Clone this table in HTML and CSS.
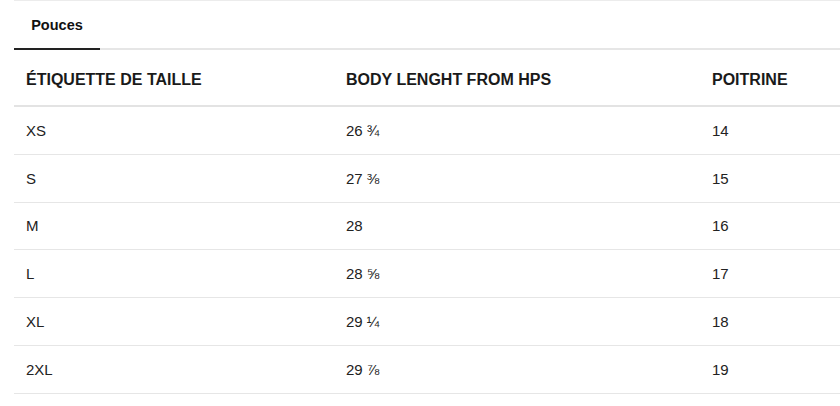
FILE: index.html
```html
<!DOCTYPE html>
<html lang="fr">
<head>
<meta charset="utf-8">
<link rel="stylesheet" href="styles.css">
</head>
<body>
<div class="wrap">
  <div class="tabs">
    <div class="tab active">Pouces</div>
  </div>
  <table class="sizes">
    <colgroup>
      <col class="c1"><col class="c2"><col class="c3">
    </colgroup>
    <thead>
      <tr><th>ÉTIQUETTE DE TAILLE</th><th>BODY LENGHT FROM HPS</th><th>POITRINE</th></tr>
    </thead>
    <tbody>
      <tr><td>XS</td><td>26 ¾</td><td>14</td></tr>
      <tr><td>S</td><td>27 ⅜</td><td>15</td></tr>
      <tr><td>M</td><td>28</td><td>16</td></tr>
      <tr><td>L</td><td>28 ⅝</td><td>17</td></tr>
      <tr><td>XL</td><td>29 ¼</td><td>18</td></tr>
      <tr><td>2XL</td><td>29 ⅞</td><td>19</td></tr>
    </tbody>
  </table>
</div>
</body>
</html>
```

FILE: styles.css
```css
html, body {
  margin: 0;
  padding: 0;
  background: #fff;
}
body {
  font-family: "Liberation Sans", Arial, sans-serif;
  color: #222;
  font-size: 15px;
}
.wrap {
  margin-left: 14px;
  border-top: 1px solid #ececec;
}
.tabs {
  display: flex;
  border-bottom: 2px solid #e6e6e6;
  height: 47px;
}
.tab {
  width: 86px;
  box-sizing: border-box;
  text-align: center;
  font-weight: bold;
  font-size: 14.5px;
  line-height: 14px;
  padding-top: 17px;
  color: #111;
}
.tab.active {
  border-bottom: 2px solid #222;
  margin-bottom: -2px;
}
.sizes {
  width: 826px;
  border-collapse: collapse;
  table-layout: fixed;
}
.c1 { width: 320px; }
.c2 { width: 366px; }
.c3 { width: 140px; }
.sizes th {
  text-align: left;
  font-weight: bold;
  font-size: 16px;
  line-height: 18px;
  color: #1a1a1a;
  height: 56px;
  padding: 5px 0 0 12px;
  box-sizing: border-box;
  border-bottom: 2px solid #e3e3e3;
  vertical-align: middle;
}
.sizes td {
  height: 46.8px;
  padding: 0 0 0 12px;
  border-bottom: 1px solid #e6e6e6;
  vertical-align: middle;
  font-size: 15px;
  color: #222;
}
```
